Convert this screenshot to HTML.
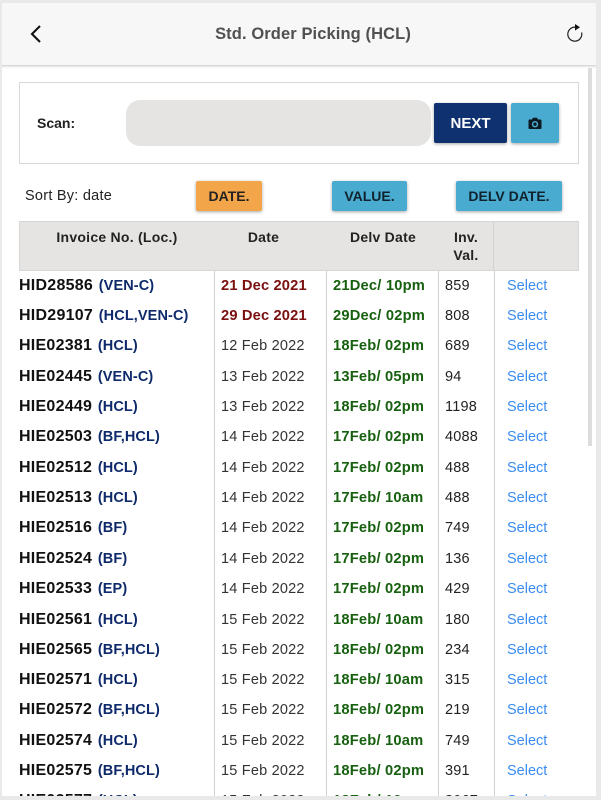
<!DOCTYPE html>
<html><head><meta charset="utf-8"><style>
html,body{margin:0;padding:0;background:#e9e9e9}
body{width:601px;height:800px;overflow:hidden;position:relative;font-family:"Liberation Sans",sans-serif;color:#1a1a1a}
#f{position:absolute;left:2px;top:3px;width:594px;height:793px;background:#fff;overflow:hidden}
#p{position:absolute;left:-2px;top:-3px;width:601px;height:800px}
.a{position:absolute;white-space:nowrap}
.hd{left:0;top:0;width:601px;height:65px;background:#f7f7f7;border-bottom:1px solid #d8d8d8;box-shadow:0 1px 2px rgba(0,0,0,.12)}
.b{border-radius:2px;text-align:center;font-weight:bold;box-shadow:0 1px 3px rgba(0,0,0,.35)}
.bl{background:#4aabd0;color:#10222e}
.th{font-weight:bold;font-size:14px;line-height:18px;text-align:center;color:#222;letter-spacing:.25px}
.v{width:1px;background:#d2d2d2;top:271px;height:530px}
.r{position:absolute;left:0;width:601px;height:20px;line-height:20px;font-size:14.5px;white-space:nowrap}
.r span{position:absolute;top:1px}
.i{left:19px;font-weight:bold;font-size:16px;color:#111;letter-spacing:.25px}
.i b{font-size:14.5px;color:#0f2a6b;margin-left:1px;letter-spacing:.1px}
.d{left:221px;color:#333;letter-spacing:.2px}
.r .dr{color:#7a1010;font-weight:bold;font-size:14.7px;letter-spacing:.15px;top:1px}
.r .g{left:333px;color:#17600f;font-weight:bold;font-size:14.7px;letter-spacing:.2px;top:1px}
.n{left:445px;color:#222;letter-spacing:.2px}
.s{left:507px;color:#3b8cf0}
</style></head><body>
<div id="f"><div id="p">
<div class="a hd"></div>
<svg class="a" style="left:27px;top:24px" width="18" height="20" viewBox="0 0 18 20"><path d="M13 2 L5 10 L13 18" fill="none" stroke="#111" stroke-width="2.1"/></svg>
<div class="a" style="left:0;width:626px;top:24px;line-height:20px;text-align:center;font-size:16.5px;font-weight:bold;color:#505050;letter-spacing:.1px">Std. Order Picking (HCL)</div>
<svg class="a" style="left:565px;top:23px" width="20" height="20" viewBox="0 0 20 20"><path d="M10.500 4.200 A7 7 0 1 0 16.600 9.500" fill="none" stroke="#222" stroke-width="1.200"/><path d="M10 1 L15 4.300 L10 7.500 Z" fill="#111"/></svg>
<div class="a" style="left:19px;top:82px;width:558px;height:80px;border:1px solid #d8d8d8"></div>
<div class="a" style="left:37px;top:113px;line-height:20px;font-size:14px;font-weight:bold;color:#222">Scan:</div>
<div class="a" style="left:126px;top:100px;width:305px;height:46px;background:#e5e4e2;border-radius:14px"></div>
<div class="a b" style="left:434px;top:103px;width:73px;height:40px;line-height:42px;background:#10316f;color:#fff;font-size:15px">NEXT</div>
<div class="a b bl" style="left:511px;top:103px;width:48px;height:40px"></div>
<svg class="a" style="left:528px;top:117px" width="14" height="13" viewBox="0 0 14 13"><path fill-rule="evenodd" d="M1.500 2.500H4L5 .8H9L10 2.500H12.500A1 1 0 0 1 13.500 3.500V11A1 1 0 0 1 12.500 12H1.500A1 1 0 0 1 .5 11V3.500A1 1 0 0 1 1.500 2.500ZM7 4A3.200 3.200 0 1 0 7 10.400A3.200 3.200 0 1 0 7 4ZM7 5.500A1.700 1.700 0 1 1 7 8.900A1.700 1.700 0 1 1 7 5.500Z" fill="#0b1a22"/></svg>
<div class="a" style="left:25px;top:186px;line-height:20px;font-size:14.500px;color:#222;letter-spacing:.25px">Sort By: date</div>
<div class="a b" style="left:196px;top:181px;width:66px;height:30px;line-height:30px;background:#f3a54a;color:#222;font-size:14px">DATE.</div>
<div class="a b bl" style="left:332px;top:181px;width:75px;height:30px;line-height:30px;font-size:14px">VALUE.</div>
<div class="a b bl" style="left:456px;top:181px;width:106px;height:30px;line-height:30px;font-size:14px">DELV DATE.</div>
<div class="a" style="left:19px;top:221px;width:558px;height:48px;background:#e5e4e2;border:1px solid #d6d6d6"></div>
<div class="a" style="left:493px;width:1px;top:222px;height:48px;background:#d2d2d2"></div>
<div class="a th" style="left:19px;width:196px;top:228px">Invoice No. (Loc.)</div>
<div class="a th" style="left:215px;width:97px;top:228px">Date</div>
<div class="a th" style="left:333px;width:100px;top:228px">Delv Date</div>
<div class="a th" style="left:438px;width:56px;top:228px">Inv.<br>Val.</div>
<div class="a v" style="left:214px"></div><div class="a v" style="left:326px"></div><div class="a v" style="left:438px"></div><div class="a v" style="left:494px"></div>
<div class="a" style="left:588px;top:68px;width:4px;height:378px;background:#dcdcdc"></div>

<div class="r" style="top:275px"><span class="i">HID28586 <b>(VEN-C)</b></span><span class="d dr">21 Dec 2021</span><span class="g">21Dec/ 10pm</span><span class="n">859</span><span class="s">Select</span></div>
<div class="r" style="top:305px"><span class="i">HID29107 <b>(HCL,VEN-C)</b></span><span class="d dr">29 Dec 2021</span><span class="g">29Dec/ 02pm</span><span class="n">808</span><span class="s">Select</span></div>
<div class="r" style="top:335px"><span class="i">HIE02381 <b>(HCL)</b></span><span class="d">12 Feb 2022</span><span class="g">18Feb/ 02pm</span><span class="n">689</span><span class="s">Select</span></div>
<div class="r" style="top:366px"><span class="i">HIE02445 <b>(VEN-C)</b></span><span class="d">13 Feb 2022</span><span class="g">13Feb/ 05pm</span><span class="n">94</span><span class="s">Select</span></div>
<div class="r" style="top:396px"><span class="i">HIE02449 <b>(HCL)</b></span><span class="d">13 Feb 2022</span><span class="g">18Feb/ 02pm</span><span class="n">1198</span><span class="s">Select</span></div>
<div class="r" style="top:426px"><span class="i">HIE02503 <b>(BF,HCL)</b></span><span class="d">14 Feb 2022</span><span class="g">17Feb/ 02pm</span><span class="n">4088</span><span class="s">Select</span></div>
<div class="r" style="top:457px"><span class="i">HIE02512 <b>(HCL)</b></span><span class="d">14 Feb 2022</span><span class="g">17Feb/ 02pm</span><span class="n">488</span><span class="s">Select</span></div>
<div class="r" style="top:487px"><span class="i">HIE02513 <b>(HCL)</b></span><span class="d">14 Feb 2022</span><span class="g">17Feb/ 10am</span><span class="n">488</span><span class="s">Select</span></div>
<div class="r" style="top:517px"><span class="i">HIE02516 <b>(BF)</b></span><span class="d">14 Feb 2022</span><span class="g">17Feb/ 02pm</span><span class="n">749</span><span class="s">Select</span></div>
<div class="r" style="top:548px"><span class="i">HIE02524 <b>(BF)</b></span><span class="d">14 Feb 2022</span><span class="g">17Feb/ 02pm</span><span class="n">136</span><span class="s">Select</span></div>
<div class="r" style="top:578px"><span class="i">HIE02533 <b>(EP)</b></span><span class="d">14 Feb 2022</span><span class="g">17Feb/ 02pm</span><span class="n">429</span><span class="s">Select</span></div>
<div class="r" style="top:609px"><span class="i">HIE02561 <b>(HCL)</b></span><span class="d">15 Feb 2022</span><span class="g">18Feb/ 10am</span><span class="n">180</span><span class="s">Select</span></div>
<div class="r" style="top:639px"><span class="i">HIE02565 <b>(BF,HCL)</b></span><span class="d">15 Feb 2022</span><span class="g">18Feb/ 02pm</span><span class="n">234</span><span class="s">Select</span></div>
<div class="r" style="top:669px"><span class="i">HIE02571 <b>(HCL)</b></span><span class="d">15 Feb 2022</span><span class="g">18Feb/ 10am</span><span class="n">315</span><span class="s">Select</span></div>
<div class="r" style="top:699px"><span class="i">HIE02572 <b>(BF,HCL)</b></span><span class="d">15 Feb 2022</span><span class="g">18Feb/ 02pm</span><span class="n">219</span><span class="s">Select</span></div>
<div class="r" style="top:730px"><span class="i">HIE02574 <b>(HCL)</b></span><span class="d">15 Feb 2022</span><span class="g">18Feb/ 10am</span><span class="n">749</span><span class="s">Select</span></div>
<div class="r" style="top:760px"><span class="i">HIE02575 <b>(BF,HCL)</b></span><span class="d">15 Feb 2022</span><span class="g">18Feb/ 02pm</span><span class="n">391</span><span class="s">Select</span></div>
<div class="r" style="top:790px"><span class="i">HIE02577 <b>(HCL)</b></span><span class="d">15 Feb 2022</span><span class="g">18Feb/ 10am</span><span class="n">3067</span><span class="s">Select</span></div>
</div></div>
</body></html>
